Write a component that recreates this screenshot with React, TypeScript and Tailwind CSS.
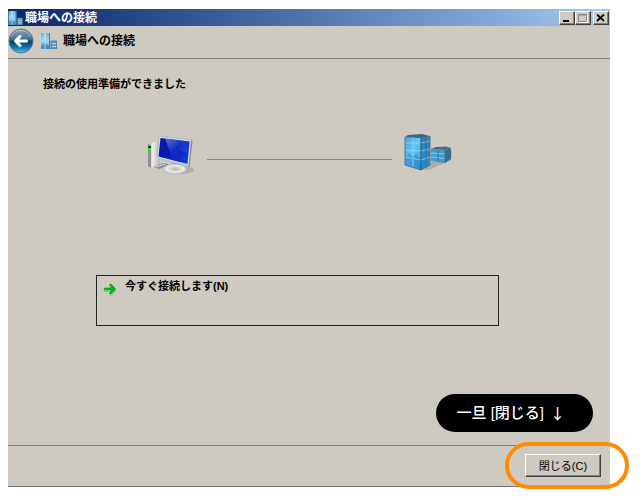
import { ReactNode } from "react";

type BuildingIconProps = {
  className: string;
};

function BuildingIcon({ className }: BuildingIconProps) {
  return (
    <svg viewBox="0 0 16 16" className={className} aria-hidden="true">
      <defs>
        <linearGradient id="tower" x1="0" y1="0" x2="0" y2="1">
          <stop offset="0" stopColor="#6db4de" />
          <stop offset="0.5" stopColor="#9ad6f5" />
          <stop offset="1" stopColor="#5fabdc" />
        </linearGradient>
      </defs>
      <path d="M0 0h9v16H0z" fill="url(#tower)" />
      <path d="M8 0h1v16H8z" fill="#3a7ba6" />
      <path d="M4 0v8" stroke="#d8f1fc" strokeWidth="1" />
      <path d="M0 16v-3l3-3 2 2 1-1 2 2v3z" fill="#2f83bd" opacity="0.7" />
      <path d="M4 9v7" stroke="#bfe4f6" strokeWidth="0.8" />
      <path d="M10 8h6v8h-6z" fill="#5a9dc2" stroke="#4a748c" strokeWidth="0.8" />
      <path d="M11 10.500h4M11 13.500h4" stroke="#a3d6ee" strokeWidth="1.200" />
    </svg>
  );
}

function BackIcon() {
  return (
    <svg viewBox="0 0 26 26" className="size-[26px]" aria-hidden="true">
      <defs>
        <linearGradient id="back" x1="0" y1="0" x2="0" y2="1">
          <stop offset="0" stopColor="#8ba4b5" />
          <stop offset="0.42" stopColor="#47718e" />
          <stop offset="0.52" stopColor="#0d4269" />
          <stop offset="0.75" stopColor="#0f6da3" />
          <stop offset="1" stopColor="#45c8ee" />
        </linearGradient>
      </defs>
      <circle cx="13" cy="13" r="12" fill="url(#back)" stroke="#5b7686" strokeWidth="1" />
      <path d="M3.500 8.500a10.500 10.500 0 0 1 19 0" fill="none" stroke="#d3dfe6" strokeWidth="1" opacity="0.6" />
      <path
        d="M18.500 13H8.500M12 8.500L7.500 13l4.500 4.500"
        fill="none"
        stroke="#fff"
        strokeWidth="3"
        strokeLinecap="round"
        strokeLinejoin="round"
      />
    </svg>
  );
}

function ComputerIcon() {
  return (
    <svg viewBox="0 0 50 44" className="h-11 w-[50px]" aria-hidden="true">
      <defs>
        <linearGradient id="screen" x1="0" y1="0" x2="1" y2="1">
          <stop offset="0" stopColor="#0a1c9a" />
          <stop offset="0.5" stopColor="#0618b4" />
          <stop offset="1" stopColor="#1444ee" />
        </linearGradient>
        <linearGradient id="glare" x1="0" y1="0" x2="0.4" y2="1">
          <stop offset="0" stopColor="#6f86e0" />
          <stop offset="0.6" stopColor="#1733cc" />
          <stop offset="1" stopColor="#0c24c0" />
        </linearGradient>
        <linearGradient id="case" x1="0" y1="0" x2="1" y2="0">
          <stop offset="0" stopColor="#a9a9a9" />
          <stop offset="0.4" stopColor="#ededed" />
          <stop offset="1" stopColor="#b4b4b4" />
        </linearGradient>
        <radialGradient id="stand">
          <stop offset="0" stopColor="#b4b4b4" />
          <stop offset="0.7" stopColor="#ececec" />
          <stop offset="1" stopColor="#c2c0bc" />
        </radialGradient>
      </defs>
      <ellipse cx="36" cy="38" rx="13" ry="4" fill="#8d8981" opacity="0.4" />
      <path d="M3 12l7-2 5 2v20l-9 4-3-2z" fill="url(#case)" />
      <path d="M3 12l3 1v23l-3-2z" fill="#8f8f8f" />
      <path d="M3 14h3v2H3z" fill="#333" />
      <path d="M3 16h3v3H3z" fill="#35d72b" />
      <path d="M9 35l9-4 6 1-10 5z" fill="#8a8a8a" />
      <path d="M11 35l9-3" stroke="#e4e4e4" strokeWidth="1" />
      <path d="M26 29l10 2v6H26z" fill="#b5b5b5" />
      <ellipse cx="30" cy="37" rx="12" ry="5" fill="url(#stand)" stroke="#b0aeaa" strokeWidth="0.5" />
      <path d="M14 4l33 4-3 26-32-8z" fill="#d5dade" stroke="#a3a7ab" strokeWidth="0.6" />
      <path d="M46 8l1.500 1-3 26h-1z" fill="#8d8d8d" />
      <path d="M15.500 6l29 3.500-2 22.500-29-7.500z" fill="url(#screen)" />
      <path d="M20 6.600l12 1.500 3 22-7-2z" fill="url(#glare)" opacity="0.8" />
      <path d="M32 8l12.500 1.500-1 12-9.500-3z" fill="#2c4fdc" opacity="0.5" />
    </svg>
  );
}

function OfficeIcon() {
  return (
    <svg viewBox="0 0 52 42" className="h-[42px] w-[52px]" aria-hidden="true">
      <defs>
        <linearGradient id="front" x1="0" y1="0" x2="1" y2="1">
          <stop offset="0" stopColor="#4ba3da" />
          <stop offset="0.45" stopColor="#62c3f5" />
          <stop offset="1" stopColor="#2b9edd" />
        </linearGradient>
        <linearGradient id="side" x1="0" y1="0" x2="0" y2="1">
          <stop offset="0" stopColor="#3780b2" />
          <stop offset="1" stopColor="#2290d0" />
        </linearGradient>
      </defs>
      <path d="M20 39l9-1 20-9 1-9-3-3z" fill="#77736c" opacity="0.35" />
      <path d="M29 18l14 1v13l-14-2z" fill="#3e9cce" />
      <path d="M43 19l6-2v11l-6 4z" fill="#3a6f8e" />
      <path d="M29 18l5-2 10-.5 5 1.500-6 2z" fill="#4d6b7d" />
      <path d="M29 22l14 1M29 26l14 1.500" fill="none" stroke="#9ed4ed" strokeWidth="0.8" />
      <path d="M36 19v12M43 19v13" stroke="#386b89" strokeWidth="0.8" />
      <path d="M3 6h16v33L3 34z" fill="url(#front)" />
      <path d="M19 6l9-1v29l-9 5z" fill="url(#side)" />
      <path d="M3 6l3-2 14-1 8 2-9 2z" fill="#3f6680" />
      <path d="M3 34v-7l4-5 4 4 3-3 5 6v10z" fill="#1674b4" opacity="0.4" />
      <path d="M3 12h16l9-2M3 19l16 1 9-2M3 26l16 3 9-3" fill="none" stroke="#9ad6f2" strokeWidth="0.8" />
      <path d="M11 7v29" stroke="#9ad6f2" strokeWidth="0.8" />
      <path d="M24 6v30" stroke="#2a6b96" strokeWidth="0.8" />
      <path d="M3 6v28l16 5 9-5V5" fill="none" stroke="#3c6985" strokeWidth="0.8" />
      <path d="M19 7v32" stroke="#2a5b7a" strokeWidth="1" />
    </svg>
  );
}

function ArrowIcon() {
  return (
    <svg viewBox="0 0 14 14" className="size-3.5" aria-hidden="true">
      <path
        d="M2 8.500h9M8 4.500l4 4-4 4"
        fill="none"
        stroke="#8a8780"
        strokeWidth="3"
        strokeLinecap="round"
        opacity="0.5"
      />
      <path
        d="M2 7h9M7.500 3l4 4-4 4"
        fill="none"
        stroke="#f0f5ec"
        strokeWidth="4"
        strokeLinecap="round"
        strokeLinejoin="round"
        opacity="0.7"
      />
      <path
        d="M2 7h9M7.500 3l4 4-4 4"
        fill="none"
        stroke="#0bb01b"
        strokeWidth="3"
        strokeLinecap="round"
        strokeLinejoin="round"
      />
    </svg>
  );
}

type CaptionButtonProps = {
  label: string;
  children: ReactNode;
};

function CaptionButton({ label, children }: CaptionButtonProps) {
  return (
    <button
      type="button"
      aria-label={label}
      className="flex h-3.5 w-4 items-center justify-center border border-t-white border-r-[#404040] border-b-[#404040] border-l-white bg-[#d0ccc4] shadow-[inset_-1px_-1px_0_#808080]"
    >
      <svg viewBox="0 0 12 10" className="h-2.5 w-3" aria-hidden="true">
        {children}
      </svg>
    </button>
  );
}

export default function App() {
  return (
    <div className="min-h-screen bg-white pt-[9px] pr-8 pb-3 pl-2 font-['Liberation_Sans','Noto_Sans_CJK_JP',sans-serif] text-black">
      <main className="border-b border-[#777] bg-[#cec9c1]">
        {/* タイトルバー */}
        <div className="flex h-[17px] items-center bg-linear-to-r from-[#0a246a] to-[#a6caf0] pr-px">
          <BuildingIcon className="h-3.5 w-[15px]" />
          <span className="ml-0.5 flex-1 text-[12px] leading-4 font-bold text-white">職場への接続</span>
          <div className="flex">
            <CaptionButton label="最小化">
              <path d="M2 7h6v2H2z" fill="#000" />
            </CaptionButton>
            <CaptionButton label="最大化">
              <path d="M1.500 1.500h8v7h-8z" fill="none" stroke="#888" strokeWidth="1" />
              <path d="M1 2h9" stroke="#888" strokeWidth="1" />
              <path d="M2 9.500h8.500V2" fill="none" stroke="#fff" strokeWidth="1" />
            </CaptionButton>
            <div className="ml-0.5 flex">
              <CaptionButton label="閉じる">
                <path d="M2 1.500l7 6.500M9 1.500l-7 6.500" stroke="#000" strokeWidth="1.800" />
              </CaptionButton>
            </div>
          </div>
        </div>

        {/* ヘッダー */}
        <header className="flex h-[33px] items-center border-b border-[#808080] pb-0.5">
          <button type="button" aria-label="戻る">
            <BackIcon />
          </button>
          <BuildingIcon className="ml-[7px] size-4" />
          <span className="ml-1.5 text-[12px] leading-4 font-bold">職場への接続</span>
        </header>

        <section className="pt-[17px]">
          <h1 className="ml-[35px] text-[11px] leading-4 font-bold">接続の使用準備ができました</h1>

          <div className="mt-10 mr-[156px] ml-[137px] flex items-center">
            <ComputerIcon />
            <div className="mt-2.5 mr-2.5 ml-3 h-px flex-1 bg-[#8b8983]" />
            <div className="-mt-1">
              <OfficeIcon />
            </div>
          </div>

          <div className="mt-[99px] mr-[111px] ml-[88px] flex">
            <button
              type="button"
              className="flex h-[51px] flex-1 items-start border border-[#222] px-1.5 pt-0.5 text-left"
            >
              <span className="mt-1">
                <ArrowIcon />
              </span>
              <span className="ml-2 text-[11px] leading-4 font-bold">今すぐ接続します(N)</span>
            </button>
          </div>

          <div className="mt-[68px] flex justify-end pr-[17px]">
            <p className="flex items-center gap-1.5 rounded-full bg-black py-2 pr-7 pl-5 text-[15px] leading-[22px] font-medium text-white">
              <span>一旦 [閉じる]</span>
              <span className="font-['Noto_Sans_CJK_JP',sans-serif]">↓</span>
            </p>
          </div>
        </section>

        <footer className="mt-[13px] flex justify-end border-t border-[#808080] pt-2 pr-[9px] pb-[9px]">
          <div className="relative">
            <button
              type="button"
              className="block h-[23px] w-[76px] border border-t-white border-r-[#404040] border-b-[#404040] border-l-white text-[11px] leading-4 shadow-[inset_-1px_-1px_0_#808080]"
            >
              閉じる(C)
            </button>
            {/* 強調の囲み */}
            <div className="pointer-events-none absolute -top-3 -right-7 -bottom-3 -left-5 rounded-full border-4 border-[#ff8c00]" />
          </div>
        </footer>
      </main>
    </div>
  );
}
